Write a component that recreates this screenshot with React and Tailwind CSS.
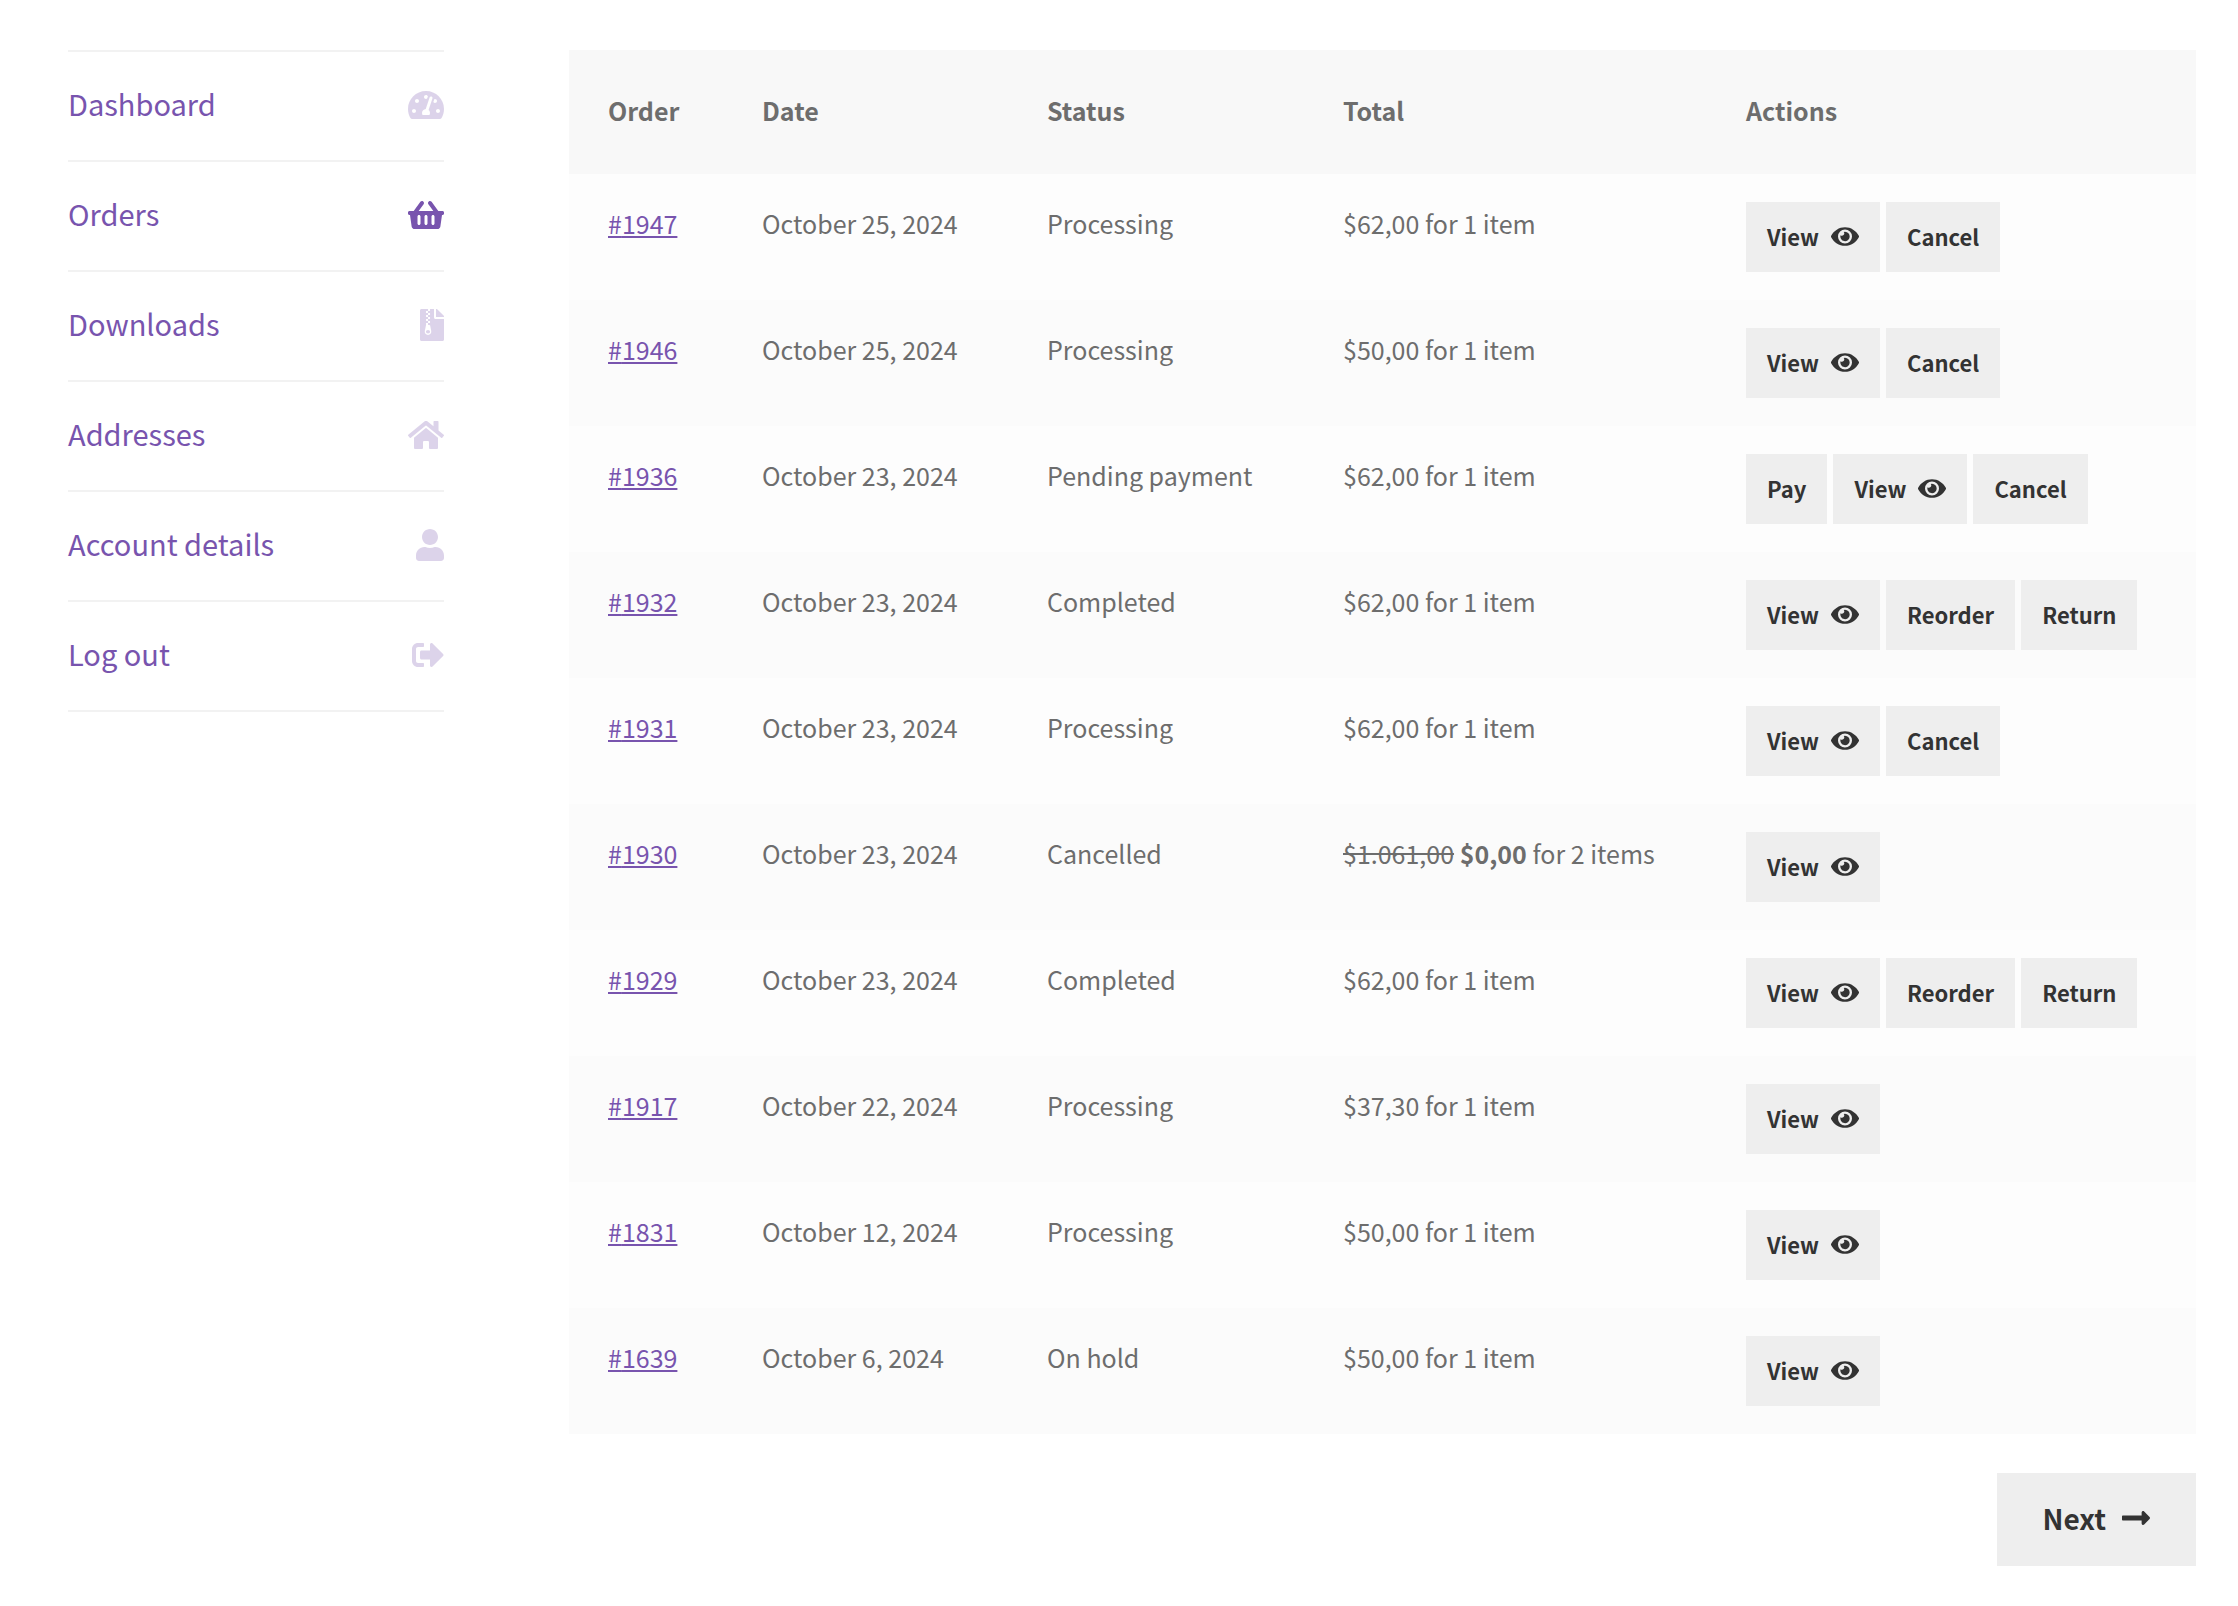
import React from "react";
import {
  FaTachometerAlt,
  FaShoppingBasket,
  FaFileArchive,
  FaHome,
  FaUser,
  FaSignOutAlt,
  FaEye,
  FaLongArrowAltRight,
} from "react-icons/fa";

const NAV = [
  { label: "Dashboard", Icon: FaTachometerAlt, size: "h-8 w-9" },
  { label: "Orders", Icon: FaShoppingBasket, size: "h-8 w-9", active: true },
  { label: "Downloads", Icon: FaFileArchive, size: "h-8 w-6" },
  { label: "Addresses", Icon: FaHome, size: "h-8 w-9" },
  { label: "Account details", Icon: FaUser, size: "h-8 w-7" },
  { label: "Log out", Icon: FaSignOutAlt, size: "h-8 w-8" },
];

const ORDERS = [
  { id: "1947", date: "October 25, 2024", status: "Processing", total: "$62,00", items: "1 item", actions: ["View", "Cancel"] },
  { id: "1946", date: "October 25, 2024", status: "Processing", total: "$50,00", items: "1 item", actions: ["View", "Cancel"] },
  { id: "1936", date: "October 23, 2024", status: "Pending payment", total: "$62,00", items: "1 item", actions: ["Pay", "View", "Cancel"] },
  { id: "1932", date: "October 23, 2024", status: "Completed", total: "$62,00", items: "1 item", actions: ["View", "Reorder", "Return"] },
  { id: "1931", date: "October 23, 2024", status: "Processing", total: "$62,00", items: "1 item", actions: ["View", "Cancel"] },
  { id: "1930", date: "October 23, 2024", status: "Cancelled", was: "$1.061,00", total: "$0,00", items: "2 items", actions: ["View"] },
  { id: "1929", date: "October 23, 2024", status: "Completed", total: "$62,00", items: "1 item", actions: ["View", "Reorder", "Return"] },
  { id: "1917", date: "October 22, 2024", status: "Processing", total: "$37,30", items: "1 item", actions: ["View"] },
  { id: "1831", date: "October 12, 2024", status: "Processing", total: "$50,00", items: "1 item", actions: ["View"] },
  { id: "1639", date: "October 6, 2024", status: "On hold", total: "$50,00", items: "1 item", actions: ["View"] },
];

function AccountNav() {
  return (
    <nav aria-label="Account" className="w-[376px] shrink-0">
      <ul className="border-t-2 border-[#f2f2f2]">
        {NAV.map(({ label, Icon, size, active }) => (
          <li key={label} className="border-b-2 border-[#f2f2f2]">
            <a
              href="#"
              aria-current={active ? "page" : undefined}
              className="flex items-center justify-between pt-[31px] pb-[33px] text-[29px] leading-[40px] text-[#7854ae]"
            >
              <span className="pb-1">{label}</span>
              <Icon aria-hidden="true" className={active ? size : `${size} opacity-25`} />
            </a>
          </li>
        ))}
      </ul>
    </nav>
  );
}

function Total({ order }) {
  if (!order.was) return <>{order.total} for {order.items}</>;
  return (
    <>
      <del>{order.was}</del> <strong className="font-bold">{order.total}</strong> for {order.items}
    </>
  );
}

function ActionLink({ label }) {
  return (
    <a
      href="#"
      className="flex h-[70px] items-center gap-3 bg-[#eeeeee] px-[21px] pb-0.5 text-[22px] font-bold text-[#333333]"
    >
      {label}
      {label === "View" && <FaEye aria-hidden="true" className="h-[25px] w-7" />}
    </a>
  );
}

function OrdersTable() {
  return (
    <table className="w-full table-fixed text-left text-[25px] leading-[42px] whitespace-nowrap text-[#6d6d6d]">
      <thead className="bg-[#f8f8f8]">
        <tr>
          <th scope="col" className="w-[154px] pt-[39px] pb-[43px] pl-[39px] font-bold">Order</th>
          <th scope="col" className="w-[285px] pt-[39px] pb-[43px] pl-[39px] font-bold">Date</th>
          <th scope="col" className="w-[296px] pt-[39px] pb-[43px] pl-[39px] font-bold">Status</th>
          <th scope="col" className="w-[402px] pt-[39px] pb-[43px] pl-[39px] font-bold">Total</th>
          <th scope="col" className="pt-[39px] pb-[43px] pl-10 font-bold">Actions</th>
        </tr>
      </thead>
      <tbody>
        {ORDERS.map((order) => (
          <tr key={order.id} className="bg-[#fdfdfd] align-top even:bg-[#fbfbfb]">
            <td className="py-7 pl-[39px]">
              <a href="#" className="text-[#7854ae] underline decoration-2 underline-offset-2">#{order.id}</a>
            </td>
            <td className="py-7 pl-[39px]">{order.date}</td>
            <td className="py-7 pl-[39px]">{order.status}</td>
            <td className="py-7 pl-[39px]"><Total order={order} /></td>
            <td className="py-7 pl-10">
              <div className="flex gap-1.5">
                {order.actions.map((label) => (
                  <ActionLink key={label} label={label} />
                ))}
              </div>
            </td>
          </tr>
        ))}
      </tbody>
    </table>
  );
}

export default function App() {
  return (
    <div className="flex min-h-screen items-start gap-[125px] bg-white pt-[50px] pr-[42px] pl-[68px] font-['Noto_Sans_CJK_SC',sans-serif]">
      <AccountNav />
      <main className="min-w-0 flex-1 pb-10">
        <OrdersTable />
        <div className="mt-[39px] flex justify-end">
          <a
            href="#"
            className="flex items-center gap-4 bg-[#eeeeee] px-[46px] pt-[23px] pb-[26px] text-[28px] leading-[44px] font-bold text-[#333333]"
          >
            Next
            <FaLongArrowAltRight aria-hidden="true" className="h-8 w-7" />
          </a>
        </div>
      </main>
    </div>
  );
}
